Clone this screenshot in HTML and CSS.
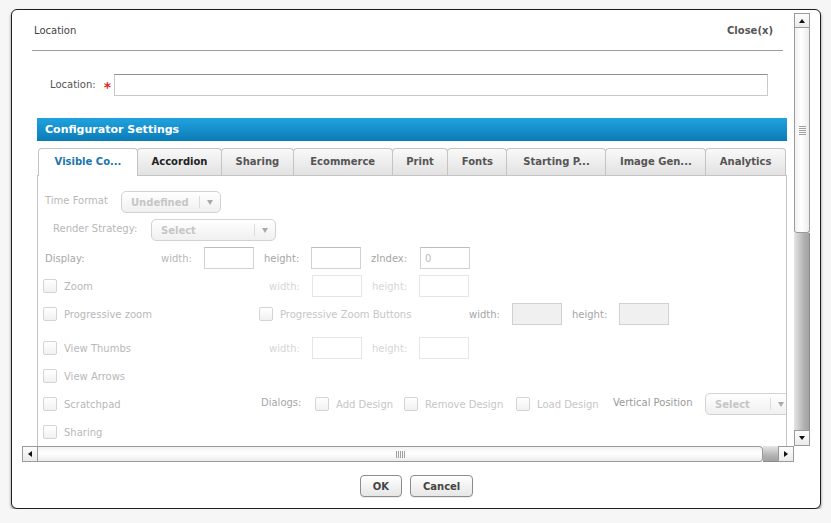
FILE: index.html
```html
<!DOCTYPE html>
<html lang="en">
<head>
    <meta charset="UTF-8">
    <meta name="viewport" content="width=device-width, initial-scale=1.0">
    <title>Location</title>
    <link rel="stylesheet" href="styles.css">
</head>
<body>

    <div class="dialog">
        <div class="scroller">
            <div class="viewport">
                <!-- Header -->
                <div class="dialog-head">
                    <span class="dialog-title">Location</span>
                    <span class="close-link">Close(x)</span>
                </div>

                <div class="location-row">
                    <label class="location-label" for="location">Location:</label>
                    <span class="required">*</span>
                    <input class="location-input" id="location" type="text">
                </div>

                <!-- Configurator -->
                <div class="config">
                    <div class="config-title">Configurator Settings</div>
                    <ul class="tabs">
                        <li class="tab wide active">Visible Co...</li>
                        <li class="tab hover">Accordion</li>
                        <li class="tab">Sharing</li>
                        <li class="tab wide">Ecommerce</li>
                        <li class="tab">Print</li>
                        <li class="tab">Fonts</li>
                        <li class="tab wide">Starting P...</li>
                        <li class="tab wide">Image Gen...</li>
                        <li class="tab">Analytics</li>
                    </ul>

                    <div class="panel">
                        <div class="row">
                            <span class="cell w-78 pl-2 raised">Time Format</span>
                            <div class="select w-100"><span class="select-text">Undefined</span><span class="select-caret"></span></div>
                        </div>
                        <div class="row">
                            <span class="cell w-108 pl-10 raised">Render Strategy:</span>
                            <div class="select w-125"><span class="select-text">Select</span><span class="select-caret"></span></div>
                        </div>
                        <div class="row">
                            <span class="cell w-118 pl-2 dark">Display:</span>
                            <span class="cell w-43">width:</span>
                            <input class="field" type="text" disabled>
                            <span class="cell w-47 ml-10 dark">height:</span>
                            <input class="field" type="text" disabled>
                            <span class="cell w-49 ml-10 dark">zIndex:</span>
                            <input class="field" type="text" value="0" disabled>
                        </div>
                        <div class="row">
                            <label class="opt w-226"><input class="check" type="checkbox" disabled><span>Zoom</span></label>
                            <span class="cell w-43 faint">width:</span>
                            <input class="field faint" type="text" disabled>
                            <span class="cell w-47 ml-10 faint">height:</span>
                            <input class="field faint" type="text" disabled>
                        </div>
                        <div class="row">
                            <label class="opt w-216"><input class="check" type="checkbox" disabled><span>Progressive zoom</span></label>
                            <label class="opt w-210 light"><input class="check" type="checkbox" disabled><span>Progressive Zoom Buttons</span></label>
                            <span class="cell w-43 dark">width:</span>
                            <input class="field filled" type="text" disabled>
                            <span class="cell w-47 ml-10 dark">height:</span>
                            <input class="field filled" type="text" disabled>
                        </div>
                        <div class="row spaced">
                            <label class="opt w-226"><input class="check" type="checkbox" disabled><span>View Thumbs</span></label>
                            <span class="cell w-43 faint">width:</span>
                            <input class="field faint" type="text" disabled>
                            <span class="cell w-47 ml-10 faint">height:</span>
                            <input class="field faint" type="text" disabled>
                        </div>
                        <div class="row">
                            <label class="opt"><input class="check" type="checkbox" disabled><span>View Arrows</span></label>
                        </div>
                        <div class="row">
                            <label class="opt w-218"><input class="check" type="checkbox" disabled><span>Scratchpad</span></label>
                            <span class="cell w-54 dark raised">Dialogs:</span>
                            <label class="opt w-89 light"><input class="check" type="checkbox" disabled><span>Add Design</span></label>
                            <label class="opt w-112 light"><input class="check" type="checkbox" disabled><span>Remove Design</span></label>
                            <label class="opt w-97 light"><input class="check" type="checkbox" disabled><span>Load Design</span></label>
                            <span class="cell w-92 darker raised">Vertical Position</span>
                            <div class="select w-87"><span class="select-text">Select</span><span class="select-caret"></span></div>
                        </div>
                        <div class="row">
                            <label class="opt"><input class="check" type="checkbox" disabled><span>Sharing</span></label>
                        </div>
                    </div>
                </div>
            </div>

            <!-- Scrollbars -->
            <div class="vbar">
                <div class="sb-btn up"></div>
                <div class="vbar-thumb"><span class="grip-h"></span></div>
                <div class="vbar-track"></div>
                <div class="sb-btn down"></div>
            </div>
            <div class="hbar">
                <div class="sb-btn left"></div>
                <div class="hbar-thumb"><span class="grip-v"></span></div>
                <div class="hbar-track"></div>
                <div class="sb-btn right"></div>
            </div>
            <div class="corner"></div>
        </div>

        <div class="actions">
            <button class="btn">OK</button>
            <button class="btn">Cancel</button>
        </div>
    </div>

</body>
</html>
```

FILE: styles.css
```css
body {
    margin: 0;
    padding: 9px 0 0 11px;
    background-color: #f6f6f6;
    font-family: 'DejaVu Sans', Verdana, sans-serif;
    font-size: 10px;
    color: #444;
}

.dialog {
    box-sizing: border-box;
    width: 810px;
    height: 500px;
    padding: 3px 9px 0 10px;
    background-color: #fff;
    border: 1px solid #1e1e1e;
    border-radius: 6px;
    box-shadow: 0 2px 3px rgba(0, 0, 0, 0.45);
}

.scroller {
    display: grid;
    grid-template-columns: 772px 16px;
    grid-template-rows: 433px 16px;
    width: 788px;
}

.viewport {
    overflow: hidden;
}

/* header */
.dialog-head {
    display: flex;
    justify-content: space-between;
    box-sizing: border-box;
    height: 38px;
    margin: 0 11px 0 10px;
    padding: 12px 10px 0 2px;
    line-height: 12px;
    border-bottom: 1px solid #9d9d9d;
}

.dialog-title {
    color: #444;
}

.close-link {
    color: #555;
    font-weight: bold;
    cursor: pointer;
}

.location-row {
    display: flex;
    align-items: center;
    height: 22px;
    margin: 23px 0 0 28px;
}

.location-label {
    padding-bottom: 1px;
    color: #555;
}

.required {
    padding-top: 4px;
    margin: 0 3px 0 8px;
    color: #e0241b;
    font-size: 14px;
    font-weight: bold;
    line-height: 1;
}

.location-input {
    box-sizing: border-box;
    width: 654px;
    height: 22px;
    margin: 0;
    padding: 0 4px;
    border: 1px solid #c9c9c9;
    border-top-color: #8f8f8f;
    font-family: inherit;
    font-size: 10px;
}

/* configurator */
.config {
    width: 750px;
    margin: 22px 0 0 15px;
}

.config-title {
    height: 23px;
    padding-left: 8px;
    line-height: 23px;
    color: #fff;
    font-size: 11px;
    font-weight: bold;
    background: linear-gradient(#20a3df, #0b7bb7);
}

.tabs {
    display: flex;
    align-items: flex-start;
    height: 27px;
    margin: 7px 0 0 1px;
    padding: 0;
    list-style: none;
}

.tab {
    box-sizing: border-box;
    height: 27px;
    margin-right: -1px;
    padding: 0 13.5px;
    line-height: 26px;
    text-align: center;
    white-space: nowrap;
    color: #555;
    font-weight: bold;
    border: 1px solid #c4c4c4;
    border-bottom: 0;
    border-radius: 4px 4px 0 0;
    background: linear-gradient(#f9f9f9, #e2e2e2);
}

.tab.wide {
    min-width: 100px;
}

.tab.hover {
    color: #222;
}

.tab.active {
    position: relative;
    z-index: 1;
    height: 28px;
    margin-bottom: -1px;
    color: #1a76ad;
    background: #fff;
}

.panel {
    box-sizing: border-box;
    height: 300px;
    padding: 12px 0 0 5px;
    overflow: hidden;
    color: #b8b8b8;
    border: 1px solid #c4c4c4;
}

.row {
    display: flex;
    align-items: center;
    height: 28px;
    white-space: nowrap;
}

.row > * {
    flex-shrink: 0;
}

.row.spaced {
    margin-top: 6px;
}

.cell {
    box-sizing: border-box;
}

.raised {
    padding-bottom: 3px;
}

.faint { color: #d6d6d6; }
.light { color: #c6c6c6; }
.dark { color: #a6a6a6; }
.darker { color: #9a9a9a; }

.w-43 { width: 43px; }
.w-47 { width: 47px; }
.w-49 { width: 49px; }
.w-54 { width: 54px; }
.w-78 { width: 78px; }
.w-87 { width: 87px; }
.w-89 { width: 89px; }
.w-92 { width: 92px; }
.w-97 { width: 97px; }
.w-100 { width: 100px; }
.w-108 { width: 108px; }
.w-112 { width: 112px; }
.w-118 { width: 118px; }
.w-125 { width: 125px; }
.w-210 { width: 210px; }
.w-216 { width: 216px; }
.w-218 { width: 218px; }
.w-226 { width: 226px; }

.pl-2 { padding-left: 2px; }
.pl-10 { padding-left: 10px; }
.ml-10 { margin-left: 10px; }

.opt {
    display: flex;
    align-items: center;
    gap: 7px;
}

.check {
    appearance: none;
    box-sizing: border-box;
    width: 14px;
    height: 14px;
    margin: 0;
    border: 1px solid #d4d4d4;
    border-radius: 2px;
    background: linear-gradient(#fff, #f1f1f1);
}

.field {
    box-sizing: border-box;
    width: 50px;
    height: 22px;
    margin: 0;
    padding: 0 4px;
    color: #bbb;
    font-family: inherit;
    font-size: 10px;
    background: #fff;
    border: 1px solid #d2d2d2;
    border-top-color: #bdbdbd;
}

.field.faint {
    border-color: #e6e6e6;
}

.field.filled {
    background: #f0f0f0;
    border-color: #d0d0d0;
}

.select {
    display: flex;
    align-items: center;
    box-sizing: border-box;
    height: 22px;
    padding-left: 9px;
    color: #c6c6c6;
    font-weight: bold;
    border: 1px solid #d2d2d2;
    border-radius: 5px;
    background: linear-gradient(#fff, #f0f0f0);
}

.select-text {
    flex: 1;
}

.select-caret {
    display: flex;
    justify-content: center;
    align-items: center;
    width: 20px;
    height: 12px;
    border-left: 1px solid #dcdcdc;
}

.select-caret::after {
    content: "";
    border-top: 5px solid #aaa;
    border-left: 3px solid transparent;
    border-right: 3px solid transparent;
}

/* scrollbars */
.sb-btn {
    display: flex;
    justify-content: center;
    align-items: center;
    box-sizing: border-box;
    width: 16px;
    height: 16px;
    border: 1px solid #9a9a9a;
    background: linear-gradient(#fcfcfc, #ebebeb);
}

.sb-btn::after {
    content: "";
}

.sb-btn.up {
    height: 15px;
}

.sb-btn.up::after {
    border-bottom: 4px solid #111;
    border-left: 3px solid transparent;
    border-right: 3px solid transparent;
}

.sb-btn.down::after {
    border-top: 4px solid #111;
    border-left: 3px solid transparent;
    border-right: 3px solid transparent;
}

.sb-btn.left::after {
    border-right: 4px solid #111;
    border-top: 3px solid transparent;
    border-bottom: 3px solid transparent;
}

.sb-btn.right::after {
    border-left: 4px solid #111;
    border-top: 3px solid transparent;
    border-bottom: 3px solid transparent;
}

.vbar {
    display: flex;
    flex-direction: column;
}

.vbar-thumb {
    display: flex;
    justify-content: center;
    align-items: center;
    box-sizing: border-box;
    height: 205px;
    border: 1px solid #9a9a9a;
    border-top: 0;
    border-radius: 0 0 3px 3px;
    background: linear-gradient(to right, #f1f1f1, #fff 45%, #ececec);
}

.vbar-track {
    flex: 1;
    border-right: 1px solid #8c8c8c;
    background: linear-gradient(to right, #e6e6e6, #b2b2b2 65%, #a2a2a2);
}

.hbar {
    display: flex;
}

.hbar-thumb {
    display: flex;
    justify-content: center;
    align-items: center;
    box-sizing: border-box;
    width: 725px;
    border: 1px solid #9a9a9a;
    border-left: 0;
    border-radius: 0 4px 4px 0;
    background: linear-gradient(#f2f2f2, #fff 45%, #ececec);
}

.hbar-track {
    flex: 1;
    border-bottom: 1px solid #8c8c8c;
    background: linear-gradient(#e6e6e6, #b2b2b2 65%, #a2a2a2);
}

.grip-h {
    width: 7px;
    height: 9px;
    background: repeating-linear-gradient(#a0a0a0 0 1px, transparent 1px 2px);
}

.grip-v {
    width: 9px;
    height: 7px;
    background: repeating-linear-gradient(to right, #a0a0a0 0 1px, transparent 1px 2px);
}

/* buttons */
.actions {
    display: flex;
    justify-content: center;
    gap: 8px;
    margin-top: 13px;
}

.btn {
    height: 22px;
    padding: 0 12px;
    color: #444;
    font-family: inherit;
    font-size: 10px;
    font-weight: bold;
    border: 1px solid #8c8c8c;
    border-radius: 4px;
    background: linear-gradient(#fff, #e6e6e6);
    box-shadow: 0 1px 0 rgba(0, 0, 0, 0.08);
    cursor: pointer;
}
```
